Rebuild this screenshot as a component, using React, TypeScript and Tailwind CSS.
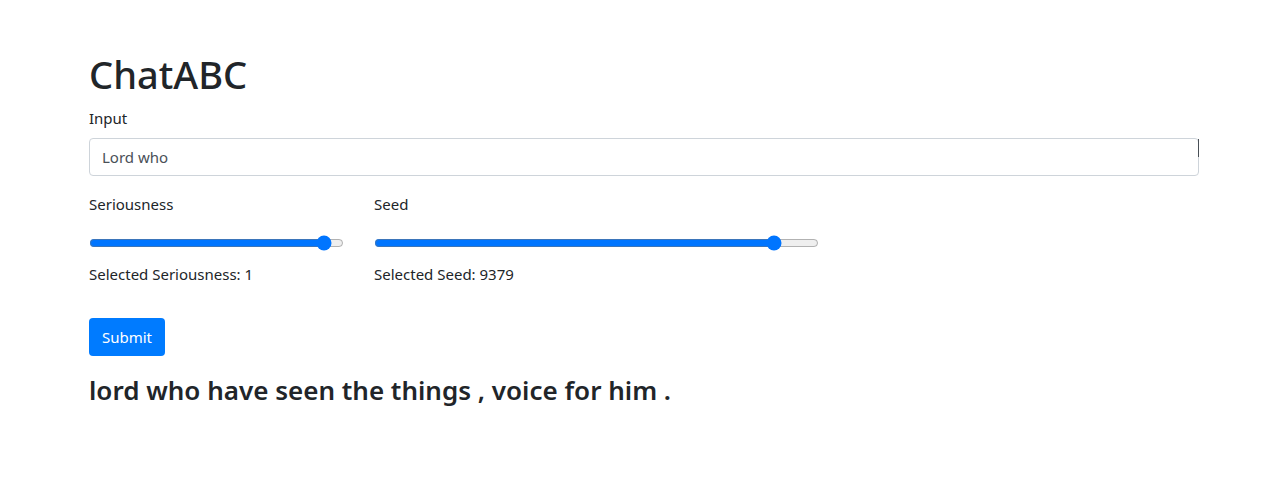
import { useState } from "react";

const font = { fontFamily: '"Noto Sans", "Open Sans", Arial, sans-serif' };

export default function App() {
  const [text, setText] = useState("Lord who");
  const [seriousness, setSeriousness] = useState(95);
  const [seed, setSeed] = useState(9135);

  return (
    <div className="min-h-screen bg-white text-[#212529]" style={font}>
      <div className="ml-[89px] w-[1110px] pt-[50px]">
        <h1 className="mb-2 text-[38px] font-medium leading-[48px]">ChatABC</h1>

        <div className="mb-4">
          <label className="mb-2 block text-[15px] leading-6">Input</label>
          <div className="relative">
            <input
              className="block h-[38px] w-full rounded border border-[#ced4da] px-3 text-[15px] text-[#495057] outline-none"
              value={text}
              onChange={(e) => setText(e.target.value)}
            />
            <span className="absolute right-0 top-[1px] h-[18px] w-px bg-[#495057]" />
          </div>
        </div>

        <div className="flex gap-[30px]">
          <div className="w-[255px]">
            <label className="block text-[15px] leading-6">Seriousness</label>
            <input
              type="range"
              min={0}
              max={100}
              value={seriousness}
              onChange={(e) => setSeriousness(Number(e.target.value))}
              className="mb-[11px] mt-[19px] block h-4 w-full"
            />
            <p className="text-[15px] leading-6">Selected Seriousness: 1</p>
          </div>
          <div className="w-[445px]">
            <label className="block text-[15px] leading-6">Seed</label>
            <input
              type="range"
              min={0}
              max={10000}
              value={seed}
              onChange={(e) => setSeed(Number(e.target.value))}
              className="mb-[11px] mt-[19px] block h-4 w-full"
            />
            <p className="text-[15px] leading-6">Selected Seed: 9379</p>
          </div>
        </div>

        <button className="mt-8 h-[38px] w-[76px] rounded bg-[#007bff] text-[15px] text-white">
          Submit
        </button>

        <h3 className="mt-5 text-[26px] font-semibold leading-[29px]">
          lord who have seen the things , voice for him .
        </h3>
      </div>
    </div>
  );
}
